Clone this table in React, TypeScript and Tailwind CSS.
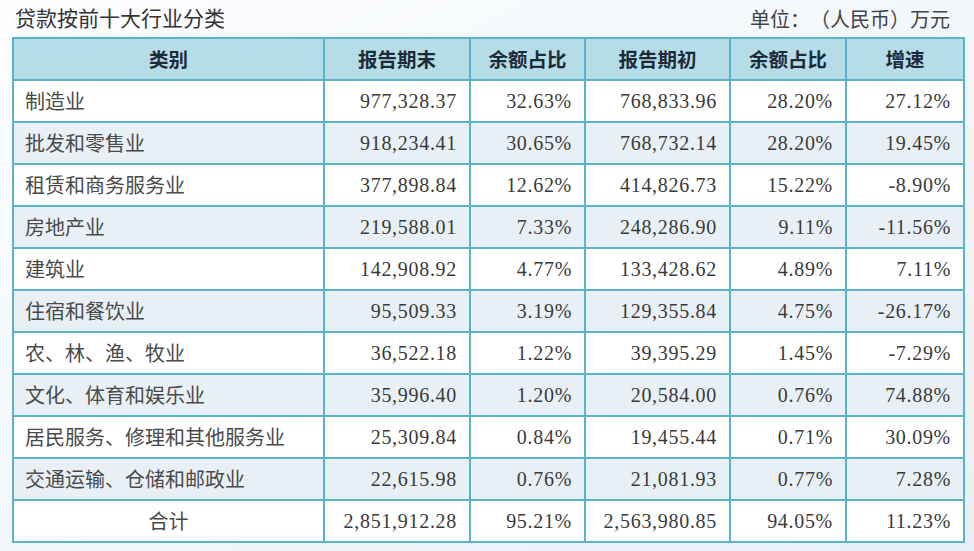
const rows: [string, string, string, string, string, string][] = [
  ["制造业", "977,328.37", "32.63%", "768,833.96", "28.20%", "27.12%"],
  ["批发和零售业", "918,234.41", "30.65%", "768,732.14", "28.20%", "19.45%"],
  ["租赁和商务服务业", "377,898.84", "12.62%", "414,826.73", "15.22%", "-8.90%"],
  ["房地产业", "219,588.01", "7.33%", "248,286.90", "9.11%", "-11.56%"],
  ["建筑业", "142,908.92", "4.77%", "133,428.62", "4.89%", "7.11%"],
  ["住宿和餐饮业", "95,509.33", "3.19%", "129,355.84", "4.75%", "-26.17%"],
  ["农、林、渔、牧业", "36,522.18", "1.22%", "39,395.29", "1.45%", "-7.29%"],
  ["文化、体育和娱乐业", "35,996.40", "1.20%", "20,584.00", "0.76%", "74.88%"],
  ["居民服务、修理和其他服务业", "25,309.84", "0.84%", "19,455.44", "0.71%", "30.09%"],
  ["交通运输、仓储和邮政业", "22,615.98", "0.76%", "21,081.93", "0.77%", "7.28%"],
];

const totals = ["2,851,912.28", "95.21%", "2,563,980.85", "94.05%", "11.23%"];

const headers = ["类别", "报告期末", "余额占比", "报告期初", "余额占比", "增速"];

const CJK = "font-['Noto_Sans_CJK_SC','Noto_Sans',sans-serif] [text-spacing-trim:space-all]";
const NUM = "font-['Liberation_Serif','Noto_Sans_CJK_SC',serif] text-[20px] tracking-[0.7px] text-[#3a3a3a]";
const CELL = "border-2 border-[#5ab3ca]";

export default function App() {
  return (
    <div className="h-[551px] w-[974px] overflow-hidden bg-gradient-to-br from-[#fcfdff] via-[#f3f7fb] to-[#e8eff6]">
      <div className="flex h-[37px] items-center justify-between pl-[15px] pr-[24px]">
        <h1 className={`${CJK} -mt-[3px] text-[21px] leading-none text-[#333]`}>
          贷款按前十大行业分类
        </h1>
        <span className={`${CJK} mt-[1px] text-[20px] leading-none text-[#444]`}>
          单位：（人民币）万元
        </span>
      </div>

      <table className="ml-[12px] w-[953px] table-fixed border-collapse border-2 border-[#5ab3ca]">
        <colgroup>
          <col className="w-[311px]" />
          <col className="w-[146px]" />
          <col className="w-[115px]" />
          <col className="w-[145px]" />
          <col className="w-[116px]" />
          <col className="w-[118px]" />
        </colgroup>
        <thead>
          <tr className="h-[42px] bg-[#b5dde8]">
            {headers.map((h, i) => (
              <th
                key={i}
                className={`${CJK} ${CELL} p-0 text-center text-[19.5px] font-bold text-[#1d2a38]`}
              >
                {h}
              </th>
            ))}
          </tr>
        </thead>
        <tbody>
          {rows.map((r, i) => (
            <tr key={r[0]} className={`h-[42px] ${i % 2 === 0 ? "bg-white" : "bg-[#e8f0f6]"}`}>
              <td className={`${CJK} ${CELL} py-0 pl-[11px] text-left text-[20px] text-[#4a4a4a]`}>
                {r[0]}
              </td>
              {r.slice(1).map((v, j) => (
                <td key={j} className={`${NUM} ${CELL} py-0 pr-[12px] text-right`}>
                  {v}
                </td>
              ))}
            </tr>
          ))}
          <tr className="h-[42px] bg-white">
            <td className={`${CJK} ${CELL} p-0 text-center text-[20px] text-[#4a4a4a]`}>
              合计
            </td>
            {totals.map((v, j) => (
              <td key={j} className={`${NUM} ${CELL} py-0 pr-[12px] text-right`}>
                {v}
              </td>
            ))}
          </tr>
        </tbody>
      </table>
    </div>
  );
}
